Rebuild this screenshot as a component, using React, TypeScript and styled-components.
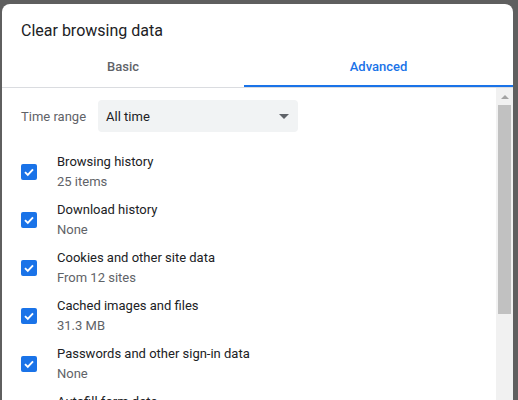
import {FC} from 'react';
import styled, {createGlobalStyle} from 'styled-components';

const GlobalStyle = createGlobalStyle`
	html, body {
		margin: 0;
		padding: 0;
		height: 100%;
		overflow: hidden;
		background: #5f5f5f;
	}
	body {
		font-family: Roboto, 'Noto Sans', 'Liberation Sans', sans-serif;
		-webkit-font-smoothing: antialiased;
	}
`;

interface DataItem {
	label: string;
	detail: string;
}

const items: DataItem[] = [
	{label: 'Browsing history', detail: '25 items'},
	{label: 'Download history', detail: 'None'},
	{label: 'Cookies and other site data', detail: 'From 12 sites'},
	{label: 'Cached images and files', detail: '31.3 MB'},
	{label: 'Passwords and other sign-in data', detail: 'None'},
	{label: 'Autofill form data', detail: 'None'},
];

const App: FC = () => {
	return (
		<>
			<GlobalStyle />
			<Page>
				<Dialog>
					<Title>Clear browsing data</Title>
					<Tabs>
						<Tab>Basic</Tab>
						<Tab active>Advanced</Tab>
					</Tabs>
					<Body>
						<Content>
							<RangeRow>
								<RangeLabel>Time range</RangeLabel>
								<Select>
									All time
									<Caret />
								</Select>
							</RangeRow>
							{items.map((item) => (
								<Row key={item.label}>
									<CheckBox>
										<svg width="12" height="12" viewBox="0 0 12 12">
											<path
												d="M2 6.2 L4.8 9 L10 3.4"
												fill="none"
												stroke="#fff"
												strokeWidth="1.9"
											/>
										</svg>
									</CheckBox>
									<RowText>
										<Label>{item.label}</Label>
										<Detail>{item.detail}</Detail>
									</RowText>
								</Row>
							))}
						</Content>
						<Scrollbar>
							<ScrollButton>
								<ArrowUp />
							</ScrollButton>
							<Track>
								<Thumb />
							</Track>
							<ScrollButton>
								<ArrowDown />
							</ScrollButton>
						</Scrollbar>
					</Body>
				</Dialog>
			</Page>
		</>
	);
};

const Page = styled.div`
	padding: 4px 5px 0 2px;
`;

const Dialog = styled.div`
	width: 511px;
	background: #fff;
	border-radius: 8px 8px 0 0;
	overflow: hidden;
`;

const Title = styled.div`
	padding: 17px 19px 0;
	font-size: 16px;
	line-height: 20px;
	color: #202124;
`;

const Tabs = styled.div`
	display: grid;
	grid-template-columns: 242px 1fr;
	margin-top: 7px;
	border-bottom: 1px solid #dadce0;
`;

const Tab = styled.div<{active?: boolean}>`
	height: 37px;
	display: flex;
	align-items: center;
	justify-content: center;
	font-size: 13px;
	font-weight: 500;
	color: ${({active}) => (active ? '#1a73e8' : '#5f6368')};
	border-bottom: 2px solid ${({active}) => (active ? '#1a73e8' : 'transparent')};
`;

const Body = styled.div`
	display: flex;
	height: 340px;
`;

const Content = styled.div`
	flex: 1;
	overflow: hidden;
	padding: 12px 0 0 19px;
`;

const RangeRow = styled.div`
	display: flex;
	align-items: center;
	gap: 12px;
	margin-bottom: 16px;
`;

const RangeLabel = styled.div`
	font-size: 13px;
	color: #5f6368;
`;

const Select = styled.div`
	width: 200px;
	height: 32px;
	box-sizing: border-box;
	padding: 0 9px 0 8px;
	display: flex;
	align-items: center;
	justify-content: space-between;
	background: #f1f3f4;
	border-radius: 4px;
	font-size: 13px;
	color: #202124;
`;

const Caret = styled.span`
	width: 0;
	height: 0;
	border-left: 5px solid transparent;
	border-right: 5px solid transparent;
	border-top: 5px solid #5f6368;
	margin-top: 1px;
`;

const Row = styled.div`
	display: flex;
	align-items: center;
	gap: 20px;
	height: 48px;
`;

const CheckBox = styled.div`
	width: 16px;
	height: 16px;
	border-radius: 2px;
	background: #1a73e8;
	display: flex;
	align-items: center;
	justify-content: center;
	flex-shrink: 0;
`;

const RowText = styled.div`
	display: flex;
	flex-direction: column;
	font-size: 13px;
	line-height: 20px;
`;

const Label = styled.div`
	color: #202124;
`;

const Detail = styled.div`
	color: #5f6368;
`;

const Scrollbar = styled.div`
	width: 17px;
	background: #f1f1f1;
	display: flex;
	flex-direction: column;
`;

const ScrollButton = styled.div`
	height: 17px;
	display: flex;
	align-items: center;
	justify-content: center;
`;

const ArrowUp = styled.span`
	width: 0;
	height: 0;
	border-left: 4px solid transparent;
	border-right: 4px solid transparent;
	border-bottom: 4px solid #a3a3a3;
`;

const ArrowDown = styled.span`
	width: 0;
	height: 0;
	border-left: 4px solid transparent;
	border-right: 4px solid transparent;
	border-top: 4px solid #505050;
`;

const Track = styled.div`
	flex: 1;
	padding: 0 2px;
`;

const Thumb = styled.div`
	height: 209px;
	background: #c1c1c1;
`;

export default App;
